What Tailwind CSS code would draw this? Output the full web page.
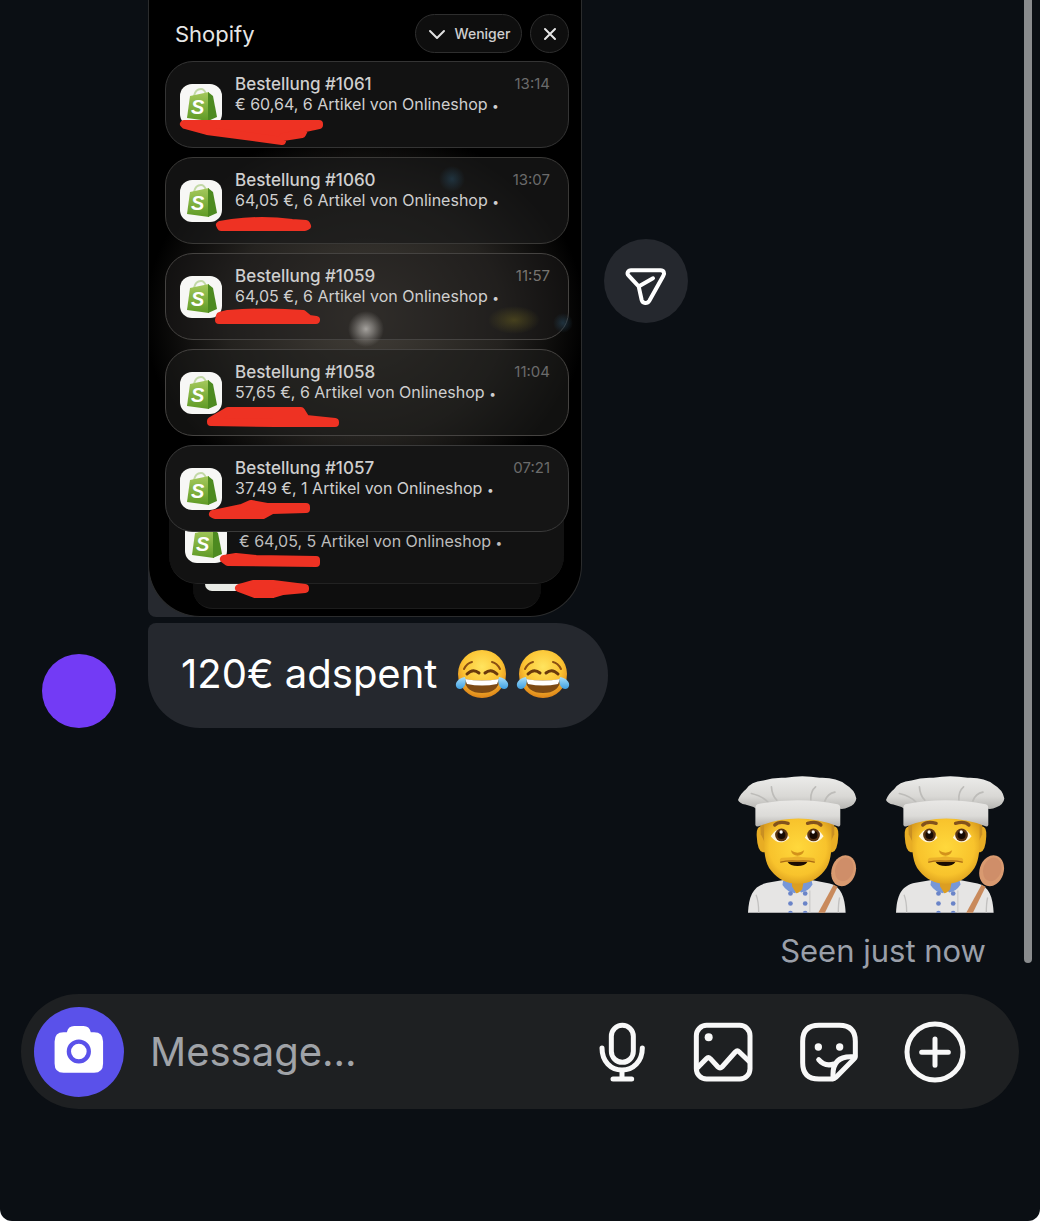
<!DOCTYPE html>
<html lang="en">
<head>
  <meta charset="UTF-8" />
  <meta name="viewport" content="width=device-width, initial-scale=1.0"/>
  <title>Chat</title>
  <script src="https://cdn.jsdelivr.net/npm/@tailwindcss/browser@4"></script>
</head>
<body class="bg-white font-['Inter','Liberation_Sans',sans-serif]">

  <!-- Shared drawings -->
  <svg class="absolute size-0" aria-hidden="true">
    <defs>
      <linearGradient id="bagLight" x1="0" y1="0" x2="0" y2="1">
        <stop offset="0" stop-color="#a5c95c"/><stop offset="1" stop-color="#5f9a25"/>
      </linearGradient>
      <radialGradient id="faceYellow" cx="0.5" cy="0.35" r="0.65">
        <stop offset="0" stop-color="#ffe45f"/><stop offset="0.6" stop-color="#fcc433"/><stop offset="1" stop-color="#dd8419"/>
      </radialGradient>
      <radialGradient id="skin" cx="0.5" cy="0.45" r="0.6">
        <stop offset="0" stop-color="#ffd83c"/><stop offset="0.7" stop-color="#f8c32c"/><stop offset="1" stop-color="#d89a1c"/>
      </radialGradient>
      <linearGradient id="hatTop" x1="0" y1="0" x2="0" y2="1">
        <stop offset="0" stop-color="#ececea"/><stop offset="0.6" stop-color="#d9d8d5"/><stop offset="1" stop-color="#b3b2af"/>
      </linearGradient>
      <linearGradient id="hatBand" x1="0" y1="0" x2="0" y2="1">
        <stop offset="0" stop-color="#e9e8e6"/><stop offset="0.6" stop-color="#dcdbd8"/><stop offset="1" stop-color="#b5b3b0"/>
      </linearGradient>
      <linearGradient id="tear" x1="0" y1="0" x2="0" y2="1">
        <stop offset="0" stop-color="#a8e0fb"/><stop offset="1" stop-color="#3f9fe0"/>
      </linearGradient>
    </defs>
    <symbol id="bag" viewBox="0 0 42 42">
      <path d="M14 12c1-5 4-7 7-7 3 0 4 2 5 5" fill="none" stroke="#c3d9a6" stroke-width="2"/>
      <path d="M10 12l19-4 0 29-22-3z" fill="url(#bagLight)"/>
      <path d="M28 8l5 4 4 21-9 4z" fill="#4d8a20"/>
    </symbol>
    <symbol id="joy" viewBox="0 0 54 50">
      <circle cx="27" cy="25" r="24" fill="url(#faceYellow)"/>
      <path d="M9 20q3-6 8-7M37 13q5 1 8 7" fill="none" stroke="#8a4f12" stroke-width="2" stroke-linecap="round"/>
      <path d="M12 25q6-6 12-1M30 24q6-5 12 1" fill="none" stroke="#6b3a0c" stroke-width="3" stroke-linecap="round"/>
      <path d="M9 30q18 3 36 0q-2 14-18 14t-18-14z" fill="#7d4a14"/>
      <path d="M10 30q17 3 34 0l-2 5q-15 3-30 0z" fill="#fff"/>
      <path d="M10 28c-6 1-10 5-9 9s7 4 9-1c1-3 1-5 0-8z" fill="url(#tear)"/>
      <path d="M44 28c6 1 10 5 9 9s-7 4-9-1c-1-3-1-5 0-8z" fill="url(#tear)"/>
    </symbol>
    <symbol id="chef" viewBox="18 26 356 409">
      <path d="M48 435c2-52 16-82 58-90l48-8h84l54 10c34 8 46 40 48 88z" fill="#e6e5e4"/>
      <path d="M80 435q0-34-8-54M318 435q0-28 4-46" fill="none" stroke="#c2c1c0" stroke-width="4"/>
      <path d="M233 368v67" stroke="#c6c5c4" stroke-width="3"/>
      <path d="M153 338l-2 14q14 22 38 24l8-12 10 10q22-4 34-24l-4-16z" fill="#7797d8"/>
      <path d="M178 334h38l-6 30q-10 12-18 12-6-10-12-20z" fill="#dc9e22"/>
      <g fill="#6a84c8">
        <circle cx="175" cy="377" r="7"/><circle cx="219" cy="377" r="7"/>
        <circle cx="175" cy="407" r="7"/><circle cx="219" cy="407" r="7"/>
        <path d="M168 435a7 6 0 0 1 14 0zM212 435a7 6 0 0 1 14 0z"/>
      </g>
      <path d="M90 176q-18-2-16 30 2 44 18 48h12M302 176q18-2 16 30-2 44-18 48h-12" fill="#e8ad24"/>
      <path d="M84 160h222v40l-10 20H96l-10-20z" fill="#c98f22"/>
      <path d="M96 150h202v70c0 30-2 66-22 90-20 25-47 38-79 38s-59-13-79-38c-20-24-22-60-22-90z" fill="url(#skin)"/>
      <path d="M128 172q12-12 40-5M226 167q28-7 40 5" fill="none" stroke="#83521c" stroke-width="10" stroke-linecap="round"/>
      <path d="M116 206q28-44 56 4-30 30-56-4zM218 210q28-48 56-4-26 34-56 4z" fill="#fff6dc"/>
      <circle cx="148" cy="202" r="19" fill="#5a3413"/><circle cx="244" cy="202" r="19" fill="#5a3413"/>
      <circle cx="148" cy="202" r="12" fill="#160a03"/><circle cx="244" cy="202" r="12" fill="#160a03"/>
      <circle cx="147" cy="193" r="5" fill="#fff"/><circle cx="243" cy="193" r="5" fill="#fff"/>
      <path d="M176 248q20 14 40 0-4 16-20 16t-20-16z" fill="#d3921a"/>
      <path d="M166 282h60q-8 13-30 13t-30-13z" fill="#1c0c02"/>
      <path d="M144 284q-4-14 8-14 34 0 44-4 10 4 44 4 12 0 8 14-20-4-34-4h-36q-14 0-34 4z" fill="#eab02a"/>
      <path d="M146 283q20-5 50-3 30-2 50 3" fill="none" stroke="#a96a14" stroke-width="4" stroke-linecap="round"/>
      <path d="M18 97q8-20 24-32 14-22 52-26 30-10 66-8 50-10 102 0 50-2 78 20 28 16 32 42-2 18-24 26-14 8-30 4L78 127q-18-12-38-16-18-4-22-14z" fill="url(#hatTop)"/>
      <path d="M58 78q34 8 50 26M118 58q2 26 16 40M236 98q-2-26 14-40M278 100q8-22 30-26" fill="none" stroke="#bdbcb9" stroke-width="5" stroke-linecap="round"/>
      <path d="M76 110q120-24 240 0 8 2 8 12v50q-2 6-8 4-118-46-236 0-8 2-10-4v-50q0-10 6-12z" fill="url(#hatBand)"/>
      <path d="M258 435l46-84 12 6-38 78z" fill="#c98a5c"/>
      <ellipse cx="334" cy="309" rx="36" ry="47" transform="rotate(18 334 309)" fill="#d99a70"/>
      <ellipse cx="336" cy="305" rx="27" ry="36" transform="rotate(18 336 305)" fill="#cf8e69"/>
    </symbol>
  </svg>

  <main class="flex min-h-screen flex-col rounded-b-xl bg-[#0b0f14]">

    <!-- Conversation -->
    <section class="relative">
      <div class="absolute top-0 right-2 bottom-1 w-2 rounded-b-full bg-[#8a8c8e]"></div>

      <!-- Shared photo -->
      <div class="flex items-center gap-[22px] pl-[148px]">
        <figure class="relative w-[434px] overflow-hidden rounded-bl-lg bg-[#26292f]">
          <div class="absolute right-0 bottom-0 size-16 bg-[#0b0f14]"></div>
          <div class="relative overflow-hidden rounded-b-[52px] border-x border-b border-[#2b2c2d] bg-black px-3 pb-[7px] pl-4">
            <div class="absolute top-[130px] left-0 h-[340px] w-full bg-[radial-gradient(ellipse_at_50%_55%,#423e38_0%,#24221f_45%,transparent_72%)]"></div>

            <div class="relative flex h-[61px] items-center gap-2 pt-[6px] pl-[10px]">
              <h1 class="grow text-[22px] leading-7 text-[#e6e6e6]">Shopify</h1>
              <button class="flex h-[39px] w-[107px] items-center justify-center gap-2 rounded-full border border-[#2e2e2e] bg-[#0e0e0e] text-sm font-medium text-[#cfcfcf]">
                <svg class="h-4 w-5" viewBox="0 0 20 16" fill="none" stroke="#e0e0e0" stroke-width="2" stroke-linecap="round" stroke-linejoin="round"><path d="M3 5l7 7 7-7"/></svg>
                Weniger
              </button>
              <button aria-label="Close" class="flex size-[39px] items-center justify-center rounded-full border border-[#2e2e2e] bg-[#0e0e0e]">
                <svg class="size-4" viewBox="0 0 16 16" stroke="#e6e6e6" stroke-width="2" stroke-linecap="round"><path d="M3 3l10 10M13 3L3 13"/></svg>
              </button>
            </div>

            <ul class="relative flex flex-col gap-[9px]">
              <li class="flex h-[87px] items-center gap-[13px] rounded-[28px] border border-[#343434] bg-[#141414]/90 pr-[18px] pl-[14px]">
                <svg class="size-[42px] rounded-xl bg-[#f7f7f5] font-['Liberation_Sans',sans-serif] text-xl font-bold italic" fill="#fff"><use href="#bag"/><text x="11" y="30">S</text></svg>
                <div class="grow self-start pt-3 text-[#cfcfcf]">
                  <div class="flex justify-between"><h2 class="text-[17px] leading-5 font-medium">Bestellung #1061</h2><time class="text-[15px] leading-5 text-[#6b6b6b]">13:14</time></div>
                  <p class="text-base leading-5 whitespace-nowrap">€ 60,64, 6 Artikel von Onlineshop <span class="align-middle text-xs leading-none">•</span></p>
                </div>
              </li>
              <li class="flex h-[87px] items-center gap-[13px] rounded-[28px] border border-[#3a3937] bg-[#1a1a19]/70 pr-[18px] pl-[14px]">
                <svg class="size-[42px] rounded-xl bg-[#f7f7f5] font-['Liberation_Sans',sans-serif] text-xl font-bold italic" fill="#fff"><use href="#bag"/><text x="11" y="30">S</text></svg>
                <div class="grow self-start pt-3 text-[#cfcfcf]">
                  <div class="flex justify-between"><h2 class="text-[17px] leading-5 font-medium">Bestellung #1060</h2><time class="text-[15px] leading-5 text-[#6b6b6b]">13:07</time></div>
                  <p class="text-base leading-5 whitespace-nowrap">64,05 €, 6 Artikel von Onlineshop <span class="align-middle text-xs leading-none">•</span></p>
                </div>
              </li>
              <li class="flex h-[87px] items-center gap-[13px] rounded-[28px] border border-[#454341] bg-[#1d1c1b]/50 pr-[18px] pl-[14px]">
                <svg class="size-[42px] rounded-xl bg-[#f7f7f5] font-['Liberation_Sans',sans-serif] text-xl font-bold italic" fill="#fff"><use href="#bag"/><text x="11" y="30">S</text></svg>
                <div class="grow self-start pt-3 text-[#cfcfcf]">
                  <div class="flex justify-between"><h2 class="text-[17px] leading-5 font-medium">Bestellung #1059</h2><time class="text-[15px] leading-5 text-[#777470]">11:57</time></div>
                  <p class="text-base leading-5 whitespace-nowrap">64,05 €, 6 Artikel von Onlineshop <span class="align-middle text-xs leading-none">•</span></p>
                </div>
              </li>
              <li class="flex h-[87px] items-center gap-[13px] rounded-[28px] border border-[#454341] bg-[#1d1c1b]/60 pr-[18px] pl-[14px]">
                <svg class="size-[42px] rounded-xl bg-[#f7f7f5] font-['Liberation_Sans',sans-serif] text-xl font-bold italic" fill="#fff"><use href="#bag"/><text x="11" y="30">S</text></svg>
                <div class="grow self-start pt-3 text-[#cfcfcf]">
                  <div class="flex justify-between"><h2 class="text-[17px] leading-5 font-medium">Bestellung #1058</h2><time class="text-[15px] leading-5 text-[#6b6b6b]">11:04</time></div>
                  <p class="text-base leading-5 whitespace-nowrap">57,65 €, 6 Artikel von Onlineshop <span class="align-middle text-xs leading-none">•</span></p>
                </div>
              </li>
              <li class="z-10 flex h-[87px] items-center gap-[13px] rounded-[28px] border border-[#3a3a3a] bg-[#151515] pr-[18px] pl-[14px]">
                <svg class="size-[42px] rounded-xl bg-[#f7f7f5] font-['Liberation_Sans',sans-serif] text-xl font-bold italic" fill="#fff"><use href="#bag"/><text x="11" y="30">S</text></svg>
                <div class="grow self-start pt-3 text-[#cfcfcf]">
                  <div class="flex justify-between"><h2 class="text-[17px] leading-5 font-medium">Bestellung #1057</h2><time class="text-[15px] leading-5 text-[#6b6b6b]">07:21</time></div>
                  <p class="text-base leading-5 whitespace-nowrap">37,49 €, 1 Artikel von Onlineshop <span class="align-middle text-xs leading-none">•</span></p>
                </div>
              </li>
            </ul>

            <!-- Stacked cards below the last one -->
            <div class="relative z-[1] -mt-[27px] mr-[5px] ml-1 flex h-[79px] items-end gap-3 rounded-b-[28px] border-b border-[#222] bg-[#121212] pl-4">
              <svg class="mb-5 size-[42px] rounded-xl bg-[#f7f7f5] font-['Liberation_Sans',sans-serif] text-xl font-bold italic" fill="#fff"><use href="#bag"/><text x="11" y="30">S</text></svg>
              <p class="mb-8 text-base leading-5 whitespace-nowrap text-[#bdbdbd]">€ 64,05, 5 Artikel von Onlineshop <span class="align-middle text-xs leading-none">•</span></p>
            </div>
            <div class="relative mr-7 ml-7 h-[25px] overflow-hidden rounded-b-[20px] border-b border-[#1c1c1c] bg-[#0e0e0e]">
              <div class="ml-3 h-[7px] w-[38px] rounded-b-xl bg-[#e9ebe6]"></div>
            </div>
          </div>

          <!-- Light spots and marker strokes over the photo -->
          <svg class="absolute inset-0 z-20 size-full" viewBox="148 0 434 617" aria-hidden="true">
            <defs>
              <radialGradient id="spotWhite"><stop offset="0" stop-color="#a5a29e"/><stop offset="0.4" stop-color="#8b8884" stop-opacity="0.75"/><stop offset="1" stop-color="#807d78" stop-opacity="0"/></radialGradient>
              <radialGradient id="spotGold"><stop offset="0" stop-color="#57501f" stop-opacity="0.7"/><stop offset="1" stop-color="#57501f" stop-opacity="0"/></radialGradient>
              <radialGradient id="spotBlue"><stop offset="0" stop-color="#26465a" stop-opacity="0.6"/><stop offset="1" stop-color="#26465a" stop-opacity="0"/></radialGradient>
            </defs>
            <circle cx="366" cy="329" r="18" fill="url(#spotWhite)"/>
            <ellipse cx="514" cy="320" rx="26" ry="14" fill="url(#spotGold)"/>
            <circle cx="452" cy="179" r="13" fill="url(#spotBlue)"/>
            <circle cx="563" cy="323" r="10" fill="url(#spotBlue)"/>
            <g fill="#ee3223" stroke="#ee3223" stroke-width="8" stroke-linejoin="round">
              <path d="M184 124h135v1l-14 3-3 6-19 3-1 4-29-4-46-6-22-6z"/>
              <path d="M220 225l12-2q30-4 60 0l14 1 1 2-2 1h-84z"/>
              <path d="M220 316l8-2q40-3 75 0l6 5 7 1-1 0-96 0z"/>
              <path d="M211 421l17-10h73l5 8 29 3v1l-60 0-64-1z"/>
              <path d="M213 514l29-6 9-4 16 3h39v2l-34 1-9 5h-48z"/>
              <path d="M224 559l12-2 20 2 60 1v3l-88-1z"/>
              <path d="M239 588l14-4h20l32 4v1l-22 2-10 3h-18z"/>
            </g>
          </svg>
        </figure>

        <button aria-label="Forward" class="mb-14 flex size-[84px] shrink-0 items-center justify-center rounded-full bg-[#25282e]">
          <svg class="size-[84px]" viewBox="41 24 252 252" fill="none" stroke="#fff" stroke-width="12" stroke-linecap="round" stroke-linejoin="round">
            <path d="M122 118h89c9 0 13 8 8 16l-42 75c-6 10-20 9-23-2l-9-41-30-32c-7-7-2-16 7-16zM146 166l42-24"/>
          </svg>
        </button>
      </div>

      <!-- Received message -->
      <div class="mt-[6px] flex items-end gap-8 pl-[42px]">
        <div class="size-[74px] shrink-0 rounded-full bg-[#733bf5]"></div>
        <div class="flex h-[105px] items-center gap-[18px] rounded-[52px] rounded-tl-lg bg-[#25282e] pr-[38px] pb-1 pl-[33px]">
          <p class="text-[40px] leading-[52px] whitespace-nowrap text-white">120€ adspent</p>
          <div class="flex gap-[7px]">
            <svg role="img" aria-label="Tears of joy" class="h-[50px] w-[54px]"><use href="#joy"/></svg>
            <svg role="img" aria-label="Tears of joy" class="h-[50px] w-[54px]"><use href="#joy"/></svg>
          </div>
        </div>
      </div>

      <!-- Sent reaction -->
      <div class="mt-12 flex justify-end gap-[29px] pr-[35px]">
        <svg role="img" aria-label="Cook" class="h-[137px] w-[119px]"><use href="#chef"/></svg>
        <svg role="img" aria-label="Cook" class="h-[137px] w-[119px]"><use href="#chef"/></svg>
      </div>
      <p class="mt-[22px] pr-[54px] text-right text-[31px] leading-8 text-[#9a9fa9]">Seen just now</p>
    </section>

    <!-- Composer -->
    <form class="mx-[21px] mt-[27px] flex h-[115px] items-center rounded-full bg-[#1e2022] pr-[51px] pl-[13px]">
      <button type="button" aria-label="Camera" class="size-[90px] shrink-0 rounded-full bg-[#5a51ea]">
        <svg class="size-[90px]" viewBox="103 79 271 271">
          <path d="M192 155h10q4-19 22-19h28q18 0 22 19h10q27 0 27 28v66q0 28-27 28h-92q-27 0-27-28v-66q0-28 27-28z" fill="#fff"/>
          <circle cx="238" cy="213" r="30" fill="none" stroke="#5a51ea" stroke-width="13"/>
        </svg>
      </button>
      <input type="text" aria-label="Message" placeholder="Message..." class="ml-[26px] min-w-0 grow bg-transparent text-[40px] leading-[52px] text-white outline-none placeholder:text-[#a0a3a8]"/>
      <div class="flex shrink-0 items-center gap-10">
        <button type="button" aria-label="Voice message">
          <svg class="h-[66px] w-14" viewBox="41 100 168 198" fill="none" stroke="#f8f8f8" stroke-width="15" stroke-linecap="round">
            <rect x="93" y="119" width="66" height="111" rx="33"/>
            <path d="M65 187c0 40 26 66 60 66s61-26 61-66M125 255v24M98 280h56"/>
          </svg>
        </button>
        <button type="button" aria-label="Photo">
          <svg class="size-[66px]" viewBox="328 100 198 198" fill="none" stroke="#f8f8f8" stroke-width="15" stroke-linecap="round" stroke-linejoin="round">
            <rect x="347" y="119" width="161" height="161" rx="31"/>
            <path d="M349 248l28-29q6-6 12 0l23 25q6 6 12 0l40-45q6-6 12 0l28 27"/>
            <circle cx="384" cy="155" r="12" fill="#f8f8f8" stroke="none"/>
          </svg>
        </button>
        <button type="button" aria-label="Sticker">
          <svg class="size-[66px]" viewBox="646 100 198 198" fill="none" stroke="#f8f8f8" stroke-width="15" stroke-linecap="round" stroke-linejoin="round">
            <path d="M715 119h61q48 0 48 48v43q0 6-4 10l-54 55q-5 5-11 5h-40q-49 0-49-49v-64q0-48 49-48z"/>
            <path d="M823 213h-13q-53 0-53 53v13M714 222q18 22 46 13"/>
            <circle cx="713" cy="184" r="11" fill="#f8f8f8" stroke="none"/>
            <circle cx="777" cy="184" r="11" fill="#f8f8f8" stroke="none"/>
          </svg>
        </button>
        <button type="button" aria-label="More">
          <svg class="size-[66px]" viewBox="964 100 198 198" fill="none" stroke="#f8f8f8" stroke-width="15" stroke-linecap="round">
            <circle cx="1063" cy="199" r="84"/>
            <path d="M1063 160v79M1023 200h80"/>
          </svg>
        </button>
      </div>
    </form>
  </main>
</body>
</html>
